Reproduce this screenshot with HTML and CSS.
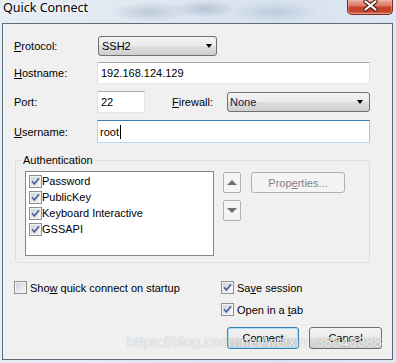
FILE: index.html
```html
<!DOCTYPE html>
<html lang="en">
<head>
    <meta charset="UTF-8">
    <title>Quick Connect</title>
    <link rel="stylesheet" href="styles.css">
</head>
<body>
    <div class="window">
        <!-- Barre de titre -->
        <div class="titlebar">
            <span class="title">Quick Connect</span>
            <button class="close" aria-label="Close">
                <svg width="46" height="15" viewBox="0 0 46 15">
                    <path d="M18.5 2.5 L28.5 10.5 M28.5 2.5 L18.5 10.5" stroke="#4a1c14" stroke-width="4.2" stroke-linecap="round"/>
                    <path d="M18.5 2.5 L28.5 10.5 M28.5 2.5 L18.5 10.5" stroke="#fff" stroke-width="2.2" stroke-linecap="round"/>
                </svg>
            </button>
        </div>

        <div class="client">
            <!-- Champs de connexion -->
            <div class="row">
                <span class="lbl"><u>P</u>rotocol:</span>
                <div class="combo combo-protocol"><span>SSH2</span><i class="arrow"></i></div>
            </div>
            <div class="row row-gap6">
                <span class="lbl"><u>H</u>ostname:</span>
                <div class="field field-wide">192.168.124.129</div>
            </div>
            <div class="row row-gap7">
                <span class="lbl">Port:</span>
                <div class="field field-port">22</div>
                <span class="lbl lbl-firewall"><u>F</u>irewall:</span>
                <div class="combo combo-firewall"><span class="combo-value">None</span><i class="arrow"></i></div>
            </div>
            <div class="row row-gap7">
                <span class="lbl"><u>U</u>sername:</span>
                <div class="field field-wide field-focus"><span>root</span><span class="caret"></span></div>
            </div>

            <!-- Authentification -->
            <fieldset class="auth">
                <legend>Authentication</legend>
                <div class="auth-body">
                    <ul class="listbox">
                        <li><span class="box checked"><svg viewBox="0 0 11 11"><path d="M2 5.2 L4.4 8 L9 2.2"/></svg></span><span>Password</span></li>
                        <li><span class="box checked"><svg viewBox="0 0 11 11"><path d="M2 5.2 L4.4 8 L9 2.2"/></svg></span><span>PublicKey</span></li>
                        <li><span class="box checked"><svg viewBox="0 0 11 11"><path d="M2 5.2 L4.4 8 L9 2.2"/></svg></span><span>Keyboard Interactive</span></li>
                        <li><span class="box checked"><svg viewBox="0 0 11 11"><path d="M2 5.2 L4.4 8 L9 2.2"/></svg></span><span>GSSAPI</span></li>
                    </ul>
                    <div class="movers">
                        <button class="mover" disabled><i class="tri-up"></i></button>
                        <button class="mover" disabled><i class="tri-down"></i></button>
                    </div>
                    <button class="btn btn-props" disabled>Prop<u>e</u>rties...</button>
                </div>
            </fieldset>

            <!-- Options -->
            <div class="options">
                <label class="check"><span class="box"></span><span>Sho<u>w</u> quick connect on startup</span></label>
                <label class="check"><span class="box checked"><svg viewBox="0 0 11 11"><path d="M2 5.2 L4.4 8 L9 2.2"/></svg></span><span>Sa<u>v</u>e session</span></label>
                <label class="check check-tab"><span class="box checked"><svg viewBox="0 0 11 11"><path d="M2 5.2 L4.4 8 L9 2.2"/></svg></span><span>Open in a <u>t</u>ab</span></label>
            </div>

            <div class="actions">
                <button class="btn btn-default btn-connect">Connect</button>
                <button class="btn btn-cancel">Cancel</button>
            </div>

            <div class="watermark">https://blog.csdn.net/weixin_38648388</div>
        </div>
    </div>
</body>
</html>
```

FILE: styles.css
```css
/* Corps de la page */
body {
    margin: 0;
    font-family: "Liberation Sans", Arial, sans-serif;
    font-size: 11px;
    color: #000;
}

/* Fenêtre façon Windows 7 */
.window {
    width: 396px;
    height: 363px;
    box-sizing: border-box;
    padding: 0 3px 3px 2px;
    display: flex;
    flex-direction: column;
    background:
        radial-gradient(ellipse 40px 10px at 150px 12px, rgba(110, 135, 165, 0.30), transparent),
        radial-gradient(ellipse 30px 9px at 205px 9px, rgba(90, 115, 150, 0.30), transparent),
        radial-gradient(ellipse 45px 10px at 275px 12px, rgba(110, 135, 165, 0.25), transparent),
        linear-gradient(90deg, #e6edf5 0, #dfe7f0 40%, #d7e2ee 70%, #dfe8f2 100%);
}

/* Barre de titre */
.titlebar {
    height: 23px;
    flex: none;
    display: flex;
    align-items: flex-start;
}

.title {
    font-family: "Noto Sans", sans-serif;
    font-size: 12.5px;
    line-height: 16px;
    margin-left: 1px;
    text-shadow: 0 0 5px #fff, 0 0 3px #fff;
}

.close {
    margin-left: auto;
    width: 46px;
    height: 15px;
    padding: 0;
    border: 1px solid #7a2c20;
    border-top: none;
    border-radius: 0 0 5px 5px;
    background: linear-gradient(#eaaa9b 0%, #db7a66 40%, #c8452b 52%, #c6402a 80%, #dd7a66 100%);
    box-shadow: inset 0 0 0 1px rgba(255, 210, 200, 0.35);
}

.close svg {
    display: block;
    margin: -1px 0 0 -1px;
}

/* Zone client */
.client {
    flex: 1;
    position: relative;
    border: 1px solid #5d6b7a;
    background: #f0f0f0;
    padding: 12px 0 0 11px;
}

.row {
    display: flex;
    align-items: center;
}

.row-gap6 {
    margin-top: 6px;
}

.row-gap7 {
    margin-top: 7px;
}

.lbl {
    width: 83px;
    flex: none;
}

.lbl-firewall {
    width: 55px;
    margin-left: 27px;
}

/* Listes déroulantes */
.combo {
    box-sizing: border-box;
    height: 20px;
    display: flex;
    align-items: center;
    justify-content: space-between;
    border: 1px solid #707070;
    border-radius: 3px;
    background: linear-gradient(#f2f2f2, #ebebeb 50%, #dddddd 51%, #cfcfcf);
    padding: 0 4px 0 3px;
}

.combo-protocol {
    width: 119px;
    margin-left: 1px;
}

.combo-firewall {
    width: 143px;
    padding: 0 6px 0 2px;
}

.combo-value {
    color: #0b1a4d;
}

.arrow {
    width: 0;
    height: 0;
    border-left: 3.5px solid transparent;
    border-right: 3.5px solid transparent;
    border-top: 4px solid #000;
}

/* Champs de saisie */
.field {
    box-sizing: border-box;
    height: 22px;
    display: flex;
    align-items: center;
    padding: 0 3px;
    background: #fff;
    border: 1px solid;
    border-color: #abadb3 #e2e3ea #e3e9ef #dbdfe6;
}

.field-wide {
    width: 273px;
}

.field-port {
    width: 48px;
}

.field-focus {
    height: 23px;
    padding-left: 2px;
    border-color: #3d7bad #a4c9e3 #b7d9ed #b5cfe7;
}

.caret {
    width: 1px;
    height: 14px;
    margin-left: 1px;
    background: #000;
}

/* Groupe Authentication */
.auth {
    box-sizing: border-box;
    width: 355px;
    min-width: 0;
    margin: 10px 0 0 1px;
    padding: 3px 9px 6px 9px;
    border: 1px solid #d5dfe5;
    border-radius: 3px;
}

.auth legend {
    padding: 0 2px;
    margin-left: -4px;
    line-height: 15px;
}

.auth-body {
    display: flex;
    align-items: flex-start;
}

.listbox {
    box-sizing: border-box;
    width: 189px;
    height: 85px;
    margin: 0;
    padding: 1px 0 0 3px;
    list-style: none;
    background: #fff;
    border: 1px solid #828790;
}

.listbox li {
    height: 16px;
    display: flex;
    align-items: center;
}

/* Cases à cocher */
.box {
    box-sizing: border-box;
    width: 13px;
    height: 13px;
    flex: none;
    border: 1px solid #8e8f8f;
    background: linear-gradient(135deg, #c9ccd2, #eceef0 70%, #f7f7f7);
    box-shadow: inset 0 0 0 1px #f4f4f4;
}

.box svg {
    display: block;
    width: 11px;
    height: 11px;
}

.box svg path {
    fill: none;
    stroke: #4a5e95;
    stroke-width: 1.7;
}

.movers {
    margin: 1px 0 0 9px;
    display: flex;
    flex-direction: column;
    gap: 7px;
}

.mover {
    width: 18px;
    height: 21px;
    padding: 0;
    display: flex;
    align-items: center;
    justify-content: center;
    border: 1px solid #adb2b5;
    border-radius: 2px;
    background: #f4f4f4;
}

.tri-up {
    border-left: 5.5px solid transparent;
    border-right: 5.5px solid transparent;
    border-bottom: 5px solid #6e6e6e;
}

.tri-down {
    border-left: 5.5px solid transparent;
    border-right: 5.5px solid transparent;
    border-top: 5px solid #6e6e6e;
}

/* Boutons */
.btn {
    box-sizing: border-box;
    height: 22px;
    padding: 0;
    font: inherit;
    color: #000;
    border: 1px solid #707070;
    border-radius: 3px;
    background: linear-gradient(#f2f2f2, #ebebeb 50%, #dddddd 51%, #cfcfcf);
}

.btn-props {
    width: 94px;
    height: 21px;
    margin: 1px 0 0 10px;
    color: #838383;
    border-color: #adb2b5;
    background: #f4f4f4;
}

.btn-default {
    border-color: #3c7fb1;
    box-shadow: inset 0 0 0 1px #a9defa;
}

.btn-connect {
    width: 72px;
}

.btn-cancel {
    width: 73px;
}

/* Options du bas */
.options {
    margin-top: 18px;
    display: grid;
    grid-template-columns: 207px auto;
    row-gap: 9px;
}

.check {
    display: flex;
    align-items: center;
    height: 13px;
}

.check .box {
    margin-right: 3px;
}

.check-tab {
    grid-column: 2;
}

.actions {
    margin-top: 11px;
    padding-left: 213px;
    display: flex;
    gap: 10px;
}

/* Filigrane */
.watermark {
    position: absolute;
    left: 124px;
    top: 309px;
    font-size: 15px;
    line-height: 17px;
    color: rgba(255, 255, 255, 0.85);
    text-shadow: 0 0 1px rgba(90, 90, 90, 0.55);
    white-space: nowrap;
}
```
